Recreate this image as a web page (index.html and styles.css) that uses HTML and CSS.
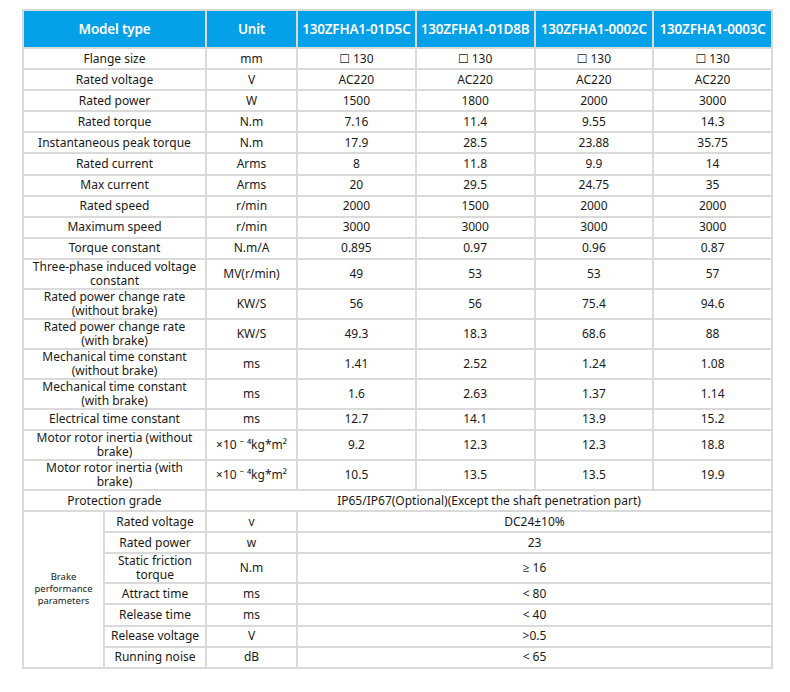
FILE: index.html
```html
<!DOCTYPE html>
<html>
<head>
<meta charset="utf-8">
<link rel="stylesheet" href="styles.css">
</head>
<body>
<table class="spec">
<colgroup>
<col class="c-grp"><col class="c-lbl"><col class="c-unit"><col class="c-v"><col class="c-v"><col class="c-v"><col class="c-v">
</colgroup>
<thead>
<tr class="head"><th colspan="2">Model type</th><th>Unit</th><th>130ZFHA1-01D5C</th><th>130ZFHA1-01D8B</th><th>130ZFHA1-0002C</th><th>130ZFHA1-0003C</th></tr>
</thead>
<tbody>
<tr><td colspan="2">Flange size</td><td>mm</td><td><span class="box">☐</span> 130</td><td><span class="box">☐</span> 130</td><td><span class="box">☐</span> 130</td><td><span class="box">☐</span> 130</td></tr>
<tr><td colspan="2">Rated voltage</td><td>V</td><td>AC220</td><td>AC220</td><td>AC220</td><td>AC220</td></tr>
<tr><td colspan="2">Rated power</td><td>W</td><td>1500</td><td>1800</td><td>2000</td><td>3000</td></tr>
<tr><td colspan="2">Rated torque</td><td>N.m</td><td>7.16</td><td>11.4</td><td>9.55</td><td>14.3</td></tr>
<tr><td colspan="2">Instantaneous peak torque</td><td>N.m</td><td>17.9</td><td>28.5</td><td>23.88</td><td>35.75</td></tr>
<tr><td colspan="2">Rated current</td><td>Arms</td><td>8</td><td>11.8</td><td>9.9</td><td>14</td></tr>
<tr><td colspan="2">Max current</td><td>Arms</td><td>20</td><td>29.5</td><td>24.75</td><td>35</td></tr>
<tr><td colspan="2">Rated speed</td><td>r/min</td><td>2000</td><td>1500</td><td>2000</td><td>2000</td></tr>
<tr><td colspan="2">Maximum speed</td><td>r/min</td><td>3000</td><td>3000</td><td>3000</td><td>3000</td></tr>
<tr><td colspan="2">Torque constant</td><td>N.m/A</td><td>0.895</td><td>0.97</td><td>0.96</td><td>0.87</td></tr>
<tr><td colspan="2">Three-phase induced voltage<br>constant</td><td>MV(r/min)</td><td>49</td><td>53</td><td>53</td><td>57</td></tr>
<tr><td colspan="2">Rated power change rate<br>(without brake)</td><td>KW/S</td><td>56</td><td>56</td><td>75.4</td><td>94.6</td></tr>
<tr><td colspan="2">Rated power change rate<br>(with brake)</td><td>KW/S</td><td>49.3</td><td>18.3</td><td>68.6</td><td>88</td></tr>
<tr><td colspan="2">Mechanical time constant<br>(without brake)</td><td>ms</td><td>1.41</td><td>2.52</td><td>1.24</td><td>1.08</td></tr>
<tr><td colspan="2">Mechanical time constant<br>(with brake)</td><td>ms</td><td>1.6</td><td>2.63</td><td>1.37</td><td>1.14</td></tr>
<tr><td colspan="2">Electrical time constant</td><td>ms</td><td>12.7</td><td>14.1</td><td>13.9</td><td>15.2</td></tr>
<tr><td colspan="2">Motor rotor inertia (without<br>brake)</td><td>×10 ⁻ ⁴kg*m²</td><td>9.2</td><td>12.3</td><td>12.3</td><td>18.8</td></tr>
<tr><td colspan="2">Motor rotor inertia (with<br>brake)</td><td>×10 ⁻ ⁴kg*m²</td><td>10.5</td><td>13.5</td><td>13.5</td><td>19.9</td></tr>
<tr><td colspan="2">Protection grade</td><td colspan="5">IP65/IP67(Optional)(Except the shaft penetration part)</td></tr>
<tr><td rowspan="7" class="grp">Brake<br>performance<br>parameters</td><td>Rated voltage</td><td>v</td><td colspan="4">DC24±10%</td></tr>
<tr><td>Rated power</td><td>w</td><td colspan="4">23</td></tr>
<tr><td>Static friction<br>torque</td><td>N.m</td><td colspan="4">≥ 16</td></tr>
<tr><td>Attract time</td><td>ms</td><td colspan="4">&lt; 80</td></tr>
<tr><td>Release time</td><td>ms</td><td colspan="4">&lt; 40</td></tr>
<tr><td>Release voltage</td><td>V</td><td colspan="4">&gt;0.5</td></tr>
<tr><td>Running noise</td><td>dB</td><td colspan="4">&lt; 65</td></tr>
</tbody>
</table>
</body>
</html>
```
FILE: styles.css
```css
html, body {
  margin: 0;
  padding: 0;
  background: #ffffff;
}
body {
  padding: 9px 0 0 22px;
  font-family: "Noto Sans", "Open Sans", sans-serif;
  color: #1a1a1a;
}
.spec {
  border-collapse: collapse;
  table-layout: fixed;
  width: 749px;
}
.c-grp { width: 81px; }
.c-lbl { width: 102px; }
.c-unit { width: 91px; }
.c-v { width: 118.75px; }
.spec th, .spec td {
  border: 2px solid #dadada;
  text-align: center;
  vertical-align: middle;
  padding: 0 1px;
  white-space: nowrap;
}
.spec td {
  font-size: 12px;
  line-height: 14px;
  height: 19.1px;
}
.box {
  font-family: "DejaVu Sans", sans-serif;
  font-size: 12px;
  line-height: 14px;
}
.head th {
  background: #04a0e8;
  color: #ffffff;
  font-size: 13.5px;
  font-weight: 600;
  height: 36px;
  padding: 0;
  letter-spacing: -0.2px;
}
.spec td.grp {
  font-size: 9.5px;
  line-height: 12px;
}
```
